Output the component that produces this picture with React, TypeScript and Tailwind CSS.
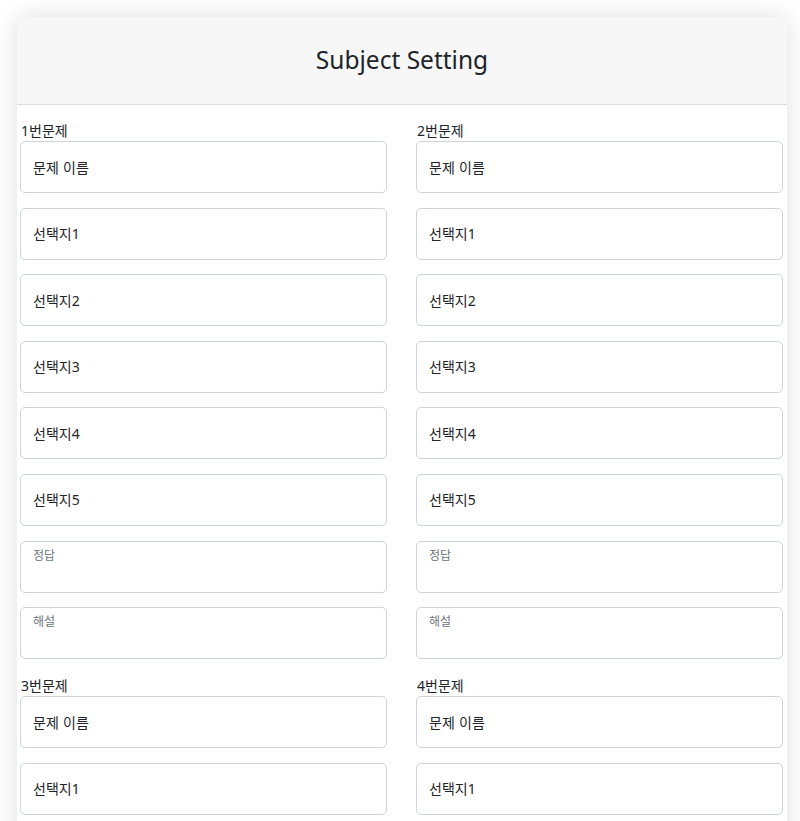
const font = { fontFamily: '"Noto Sans", "Noto Sans CJK KR", sans-serif' };

const choices = ['선택지1', '선택지2', '선택지3', '선택지4', '선택지5'];

function QuestionBlock({ n }: { n: number }) {
  return (
    <div className="flex flex-col">
      <label className="text-[14px] leading-[20px] text-[#212529] pl-px">{n}번문제</label>
      <input
        type="text"
        placeholder="문제 이름"
        className="h-[52px] w-full rounded-[5px] border border-[#ced4da] bg-white px-3 text-[14px] tracking-[0.2px] text-[#212529] placeholder:text-[#212529] outline-none"
      />
      {choices.map((c) => (
        <input
          key={c}
          type="text"
          placeholder={c}
          className="mt-[14.6px] h-[52px] w-full rounded-[5px] border border-[#ced4da] bg-white px-3 text-[14px] text-[#212529] placeholder:text-[#212529] outline-none"
        />
      ))}
      {['정답', '해설'].map((t) => (
        <textarea
          key={t}
          placeholder={t}
          className="mt-[14.6px] h-[52px] w-full resize-none rounded-[5px] border border-[#ced4da] bg-white px-3 pt-[6px] text-[12px] leading-[16px] text-[#6c757d] placeholder:text-[#6c757d] outline-none"
        />
      ))}
    </div>
  );
}

export default function App() {
  return (
    <div className="min-h-screen bg-white px-[17px] pt-[17px]" style={font}>
      <div className="w-[770px] overflow-hidden rounded-t-[8px] bg-white shadow-[0_0_24px_rgba(0,0,0,0.13)]">
        <div className="flex h-[88px] items-center justify-center border-b border-[#dcdcdc] bg-[#f7f7f7]">
          <h1 className="text-[24.5px] font-normal text-[#212529]">Subject Setting</h1>
        </div>
        <div className="grid grid-cols-2 gap-x-[29px] gap-y-[17px] pb-8 pl-[3px] pr-[4px] pt-[16px]">
          {[1, 2, 3, 4].map((n) => (
            <QuestionBlock key={n} n={n} />
          ))}
        </div>
      </div>
    </div>
  );
}
